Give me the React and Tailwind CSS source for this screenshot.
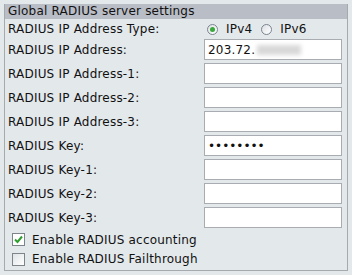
export default function App() {
  const rows = [
    "RADIUS IP Address-1:",
    "RADIUS IP Address-2:",
    "RADIUS IP Address-3:",
  ];
  const keyRows = ["RADIUS Key-1:", "RADIUS Key-2:", "RADIUS Key-3:"];
  const Input = ({ children }) => (
    <div className="w-[138px] h-[21px] bg-white border border-[#a9adb1] flex items-center px-[3px] text-[12px] text-[#111]">
      {children}
    </div>
  );
  const Row = ({ label, children }) => (
    <div className="h-[24px] flex items-start">
      <div className="w-[199px] pl-[3px] h-[21px] flex items-center">{label}</div>
      {children}
    </div>
  );
  return (
    <div className="w-[352px] h-[275px] bg-[#e3e8eb] pt-[4px] px-[4px] text-[12px] text-[#111] tracking-[0.2px]" style={{ fontFamily: '"DejaVu Sans", Verdana, sans-serif' }}>
      <div className="h-[267px] border-l border-r border-b border-[#a6aaaf] flex flex-col">
        <div className="h-[15px] bg-[#b9bdc6] pl-[3px] leading-[15px]">Global RADIUS server settings</div>
        <div className="h-[20px] flex items-center">
          <div className="w-[202px] pl-[3px]">RADIUS IP Address Type:</div>
          <div className="flex items-center">
            <span className="w-[11px] h-[11px] rounded-full border border-[#7a8490] bg-gradient-to-br from-[#dde1e5] to-white flex items-center justify-center">
              <span className="w-[5px] h-[5px] rounded-full bg-[#3aa83a]"></span>
            </span>
            <span className="ml-[8px]">IPv4</span>
            <span className="ml-[9px] w-[11px] h-[11px] rounded-full border border-[#7a8490] bg-gradient-to-br from-[#dde1e5] to-white"></span>
            <span className="ml-[8px]">IPv6</span>
          </div>
        </div>
        <Row label="RADIUS IP Address:">
          <Input>
            <span>203.72.</span>
            <span className="ml-[2px] w-[44px] h-[10px] bg-[#d8d8d8] blur-[2px]"></span>
          </Input>
        </Row>
        {rows.map((r) => (
          <Row key={r} label={r}>
            <Input />
          </Row>
        ))}
        <Row label="RADIUS Key:">
          <Input>
            <span className="tracking-[0px] text-[12px] leading-none">••••••••</span>
          </Input>
        </Row>
        {keyRows.map((r) => (
          <Row key={r} label={r}>
            <Input />
          </Row>
        ))}
        <div className="h-[19px] flex items-center pl-[7px] mt-[-1px]">
          <span className="w-[13px] h-[13px] border border-[#7d848c] bg-white flex items-center justify-center">
            <svg width="9" height="9" viewBox="0 0 9 9">
              <path d="M1 4.5 L3.5 7 L8 1.5" stroke="#2f9e2f" strokeWidth="2" fill="none" />
            </svg>
          </span>
          <span className="ml-[7px]">Enable RADIUS accounting</span>
        </div>
        <div className="h-[20px] flex items-center pl-[7px]">
          <span className="w-[13px] h-[13px] border border-[#7d848c] bg-gradient-to-br from-[#dfe3e6] to-white"></span>
          <span className="ml-[7px]">Enable RADIUS Failthrough</span>
        </div>
      </div>
    </div>
  );
}
